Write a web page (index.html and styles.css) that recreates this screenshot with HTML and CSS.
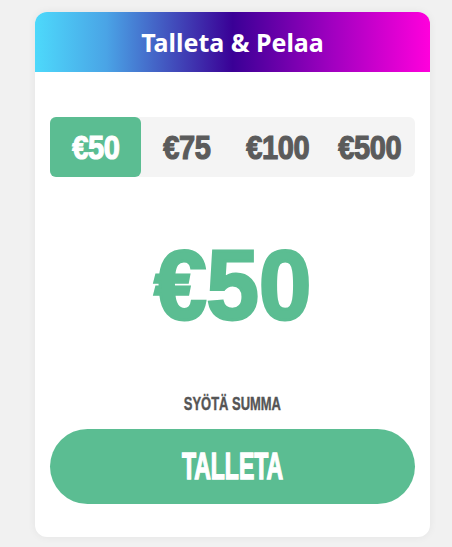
FILE: index.html
```html
<!DOCTYPE html>
<html>
<head>
<meta charset="utf-8">
<link rel="stylesheet" href="styles.css">
</head>
<body>
<div class="card">
  <div class="card-header">Talleta &amp; Pelaa</div>
  <div class="card-body">
    <div class="tabs">
      <div class="tab active"><span class="squeeze">€50</span></div>
      <div class="tab"><span class="squeeze">€75</span></div>
      <div class="tab"><span class="squeeze">€100</span></div>
      <div class="tab"><span class="squeeze">€500</span></div>
    </div>
    <div class="amount"><span class="squeeze-big">€50</span></div>
    <div class="label"><span class="squeeze-label">SYÖTÄ SUMMA</span></div>
    <div class="btn"><span class="squeeze-btn">TALLETA</span></div>
  </div>
</div>
</body>
</html>
```
FILE: styles.css
```css
html, body {
  margin: 0;
  padding: 0;
}
body {
  width: 452px;
  height: 547px;
  background: #f1f1f1;
  padding-top: 12px;
  box-sizing: border-box;
}
.card {
  margin-left: 35px;
  width: 395px;
  height: 525px;
  background: #fff;
  border-radius: 12px;
  box-shadow: 0 0 8px rgba(0,0,0,0.06);
  overflow: hidden;
  display: flex;
  flex-direction: column;
}
.card-header {
  height: 60px;
  display: flex;
  align-items: center;
  justify-content: center;
  color: #fff;
  font-family: "Noto Sans", sans-serif;
  font-weight: 700;
  font-size: 25px;
  background: linear-gradient(90deg, #4dd9fb 0%, #4aa4e6 18%, #3a0096 50%, #a000c0 75%, #ff00dc 100%);
}
.card-body {
  padding: 45px 15px 0;
  display: flex;
  flex-direction: column;
  font-family: "Liberation Sans", Arial, sans-serif;
  font-weight: 700;
}
.tabs {
  display: grid;
  grid-template-columns: repeat(4, 1fr);
  height: 60px;
  background: #f4f4f4;
  border-radius: 6px;
}
.tab {
  display: flex;
  align-items: center;
  justify-content: center;
  font-size: 33px;
  line-height: 1;
  color: #5b5b5b;
}
.tab.active {
  background: #5bbd92;
  color: #fff;
  border-radius: 6px;
}
.squeeze {
  display: inline-block;
  transform: scaleX(0.88);
  letter-spacing: -0.5px;
  -webkit-text-stroke: 1.2px currentColor;
}
.amount {
  margin-top: 58px;
  text-align: center;
  font-size: 98px;
  line-height: 100px;
  color: #5bbd92;
}
.squeeze-big {
  display: inline-block;
  transform: scaleX(0.96);
  -webkit-text-stroke: 3px currentColor;
}
.label {
  margin-top: 59px;
  text-align: center;
  font-size: 18.5px;
  line-height: 20px;
  color: #555;
}
.squeeze-label {
  display: inline-block;
  transform: scaleX(0.7);
  -webkit-text-stroke: 0.4px currentColor;
}
.btn {
  margin-top: 15px;
  height: 75px;
  border-radius: 38px;
  background: #5bbd92;
  color: #fff;
  display: flex;
  align-items: center;
  justify-content: center;
  font-size: 37px;
  line-height: 1;
}
.squeeze-btn {
  display: inline-block;
  transform: scaleX(0.62);
  -webkit-text-stroke: 1.5px currentColor;
}
```
